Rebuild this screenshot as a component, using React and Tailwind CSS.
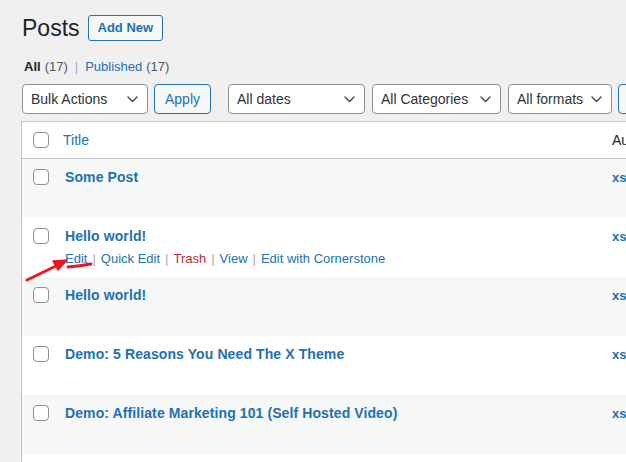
import React from 'react';

const posts = [
  { title: 'Some Post', author: 'xs' },
  { title: 'Hello world!', author: 'xs', actions: true },
  { title: 'Hello world!', author: 'xs' },
  { title: 'Demo: 5 Reasons You Need The X Theme', author: 'xs' },
  { title: 'Demo: Affiliate Marketing 101 (Self Hosted Video)', author: 'xs' },
  { title: '', author: '' },
];

const Chevron = () => (
  <svg width="11" height="7" viewBox="0 0 11 7" fill="none" className="shrink-0">
    <path d="M1 1l4.5 4.5L10 1" stroke="#50575e" strokeWidth="1.6" strokeLinecap="round" strokeLinejoin="round" />
  </svg>
);

const Select = ({ label, width }) => (
  <div
    className="flex h-[30px] shrink-0 items-center justify-between whitespace-nowrap rounded-[4px] border border-[#8c8f94] bg-white pl-[8px] pr-[9px] text-[14px] text-[#2c3338]"
    style={{ width }}
  >
    <span>{label}</span>
    <Chevron />
  </div>
);

const Checkbox = () => (
  <div className="h-[16px] w-[16px] rounded-[4px] border border-[#8c8f94] bg-white" />
);

const App = () => {
  return (
    <div
      className="relative h-[462px] w-[626px] overflow-hidden bg-[#f0f0f1] pl-[21px] text-[#3c434a]"
      style={{ fontFamily: '"Liberation Sans", Arial, sans-serif' }}
    >
      {/* Heading */}
      <div className="flex items-center gap-[8px] pl-[1px] pt-[15px]">
        <h1 className="text-[23px] leading-[26px] text-[#1d2327]">Posts</h1>
        <button className="h-[26px] rounded-[3px] border border-[#2271b1] bg-[#f6f7f7] px-[9px] text-[13px] font-semibold text-[#2271b1]">
          Add New
        </button>
      </div>

      {/* Status links */}
      <div className="mt-[18px] flex items-center pl-[3px] text-[13px] leading-[16px] text-[#50575e]">
        <span className="font-bold text-[#1d2327]">All</span>
        <span className="ml-[4px]">(17)</span>
        <span className="mx-[7px] text-[#a7aaad]">|</span>
        <span className="text-[#2271b1]">Published</span>
        <span className="ml-[4px]">(17)</span>
      </div>

      {/* Filters */}
      <div className="mt-[9px] flex w-[720px] items-center pl-[1px]">
        <Select label="Bulk Actions" width={126} />
        <button className="ml-[6px] h-[30px] w-[57px] shrink-0 rounded-[4px] border border-[#2271b1] bg-[#f6f7f7] text-[14px] text-[#2271b1]">
          Apply
        </button>
        <div className="ml-[17px]">
          <Select label="All dates" width={137} />
        </div>
        <div className="ml-[7px]">
          <Select label="All Categories" width={129} />
        </div>
        <div className="ml-[7px]">
          <Select label="All formats" width={104} />
        </div>
        <button className="ml-[6px] h-[30px] w-[60px] shrink-0 rounded-[4px] border border-[#2271b1] bg-[#f6f7f7]" />
      </div>

      {/* Table */}
      <div className="mt-[7px] w-[720px] border border-[#c3c4c7] bg-white">
        <div className="flex h-[37px] items-center border-b border-[#c3c4c7]">
          <div className="flex w-[41px] shrink-0 justify-start pl-[11px]">
            <Checkbox />
          </div>
          <div className="w-[549px] shrink-0 text-[14px] text-[#2271b1]">Title</div>
          <div className="text-[14px] text-[#1d2327]">Au</div>
        </div>
        {posts.map((post, i) => (
          <div
            key={i}
            className={`flex h-[59px] items-start pt-[10px] ${i % 2 === 0 ? 'bg-[#f6f7f7]' : 'bg-white'}`}
          >
            <div className="flex w-[41px] shrink-0 pl-[11px]">
              {post.title && <Checkbox />}
            </div>
            <div className="w-[549px] shrink-0 pl-[2px]">
              <div className="text-[14px] font-bold leading-[17px] tracking-[0.1px] text-[#2271b1]">{post.title}</div>
              {post.actions && (
                <div className="mt-[6px] flex items-center text-[13px] leading-[16px]">
                  <span className="text-[#2271b1]">Edit</span>
                  <span className="mx-[5px] text-[#a7aaad]">|</span>
                  <span className="text-[#2271b1]">Quick Edit</span>
                  <span className="mx-[5px] text-[#a7aaad]">|</span>
                  <span className="text-[#b32d2e]">Trash</span>
                  <span className="mx-[5px] text-[#a7aaad]">|</span>
                  <span className="text-[#2271b1]">View</span>
                  <span className="mx-[5px] text-[#a7aaad]">|</span>
                  <span className="text-[#2271b1]">Edit with Cornerstone</span>
                </div>
              )}
            </div>
            <div className="text-[13px] font-semibold leading-[17px] text-[#2271b1]">{post.author}</div>
          </div>
        ))}
      </div>

      {/* Red annotation arrow */}
      <svg className="pointer-events-none absolute left-0 top-0" width="626" height="462" viewBox="0 0 626 462">
        <path d="M27 280 L58 265" stroke="#f0141e" strokeWidth="3" strokeLinecap="round" />
        <path d="M67 260 L53 261 L58 270 Z" fill="#f0141e" stroke="#f0141e" strokeWidth="1.5" strokeLinejoin="round" />
        <path d="M68 267 Q80 266 91 264" stroke="#f0141e" strokeWidth="3" strokeLinecap="round" fill="none" />
      </svg>
    </div>
  );
};

export default App;
